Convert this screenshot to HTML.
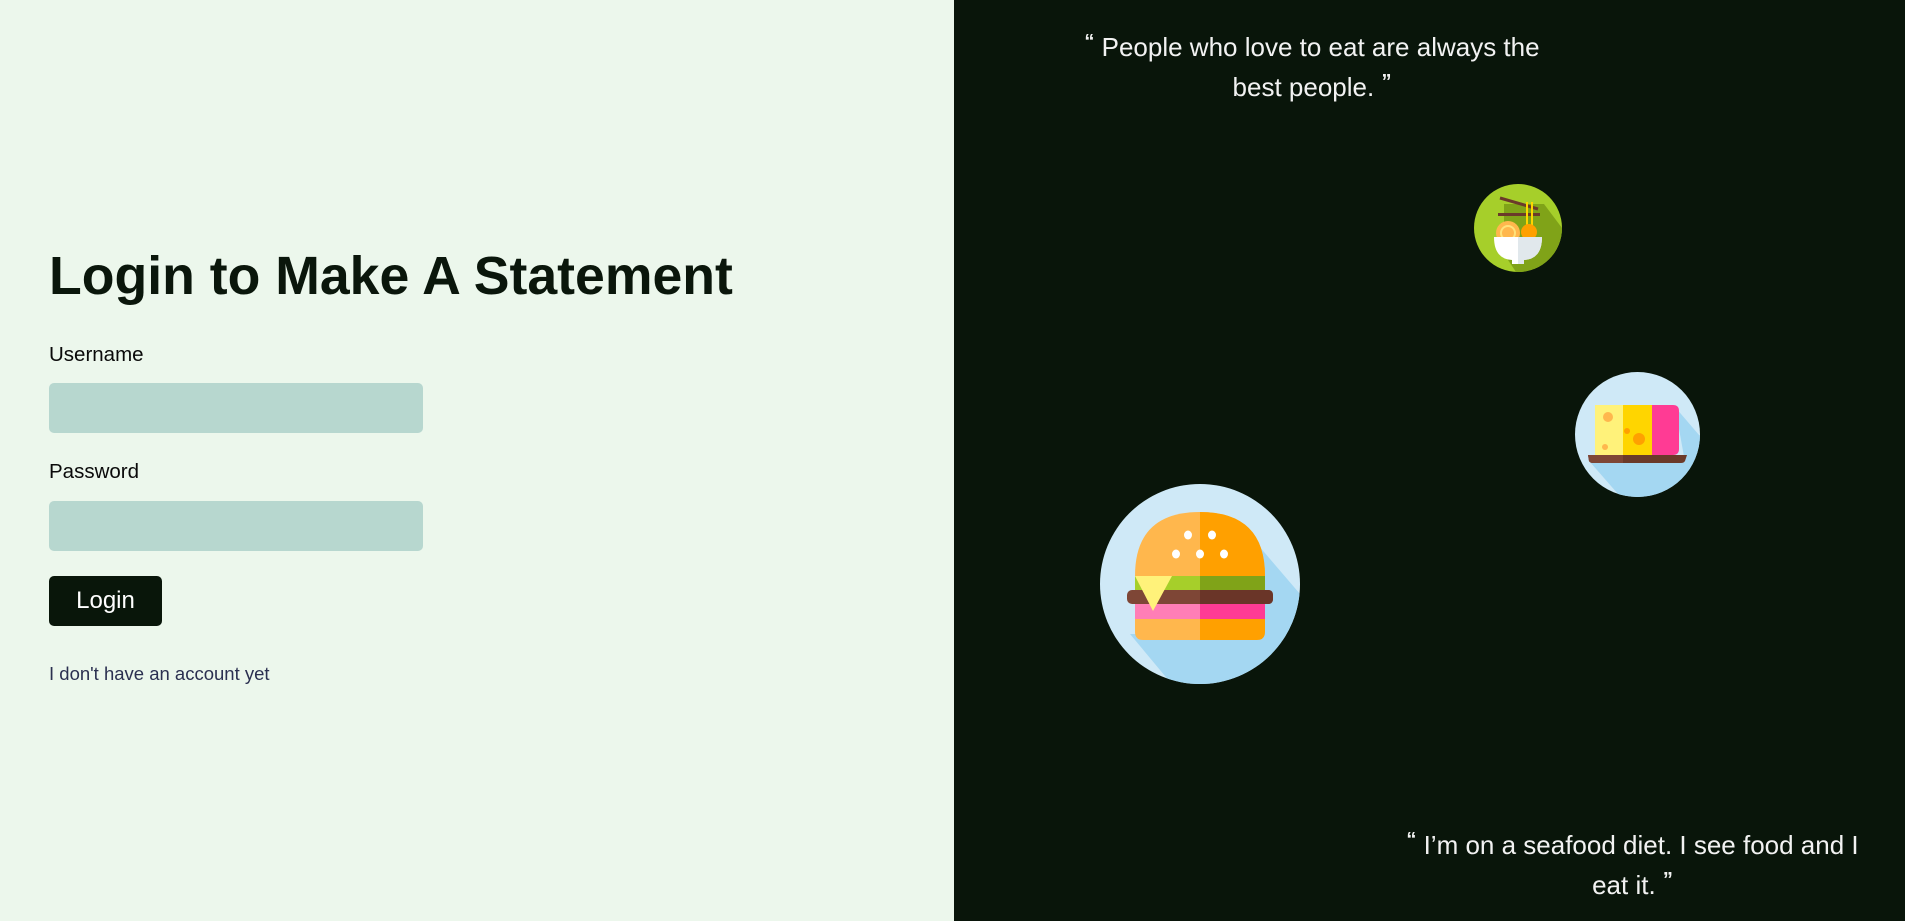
<!DOCTYPE html>
<html><head><meta charset="utf-8"><style>
html,body{margin:0;padding:0}
body{width:1905px;height:921px;position:relative;overflow:hidden;font-family:"Liberation Sans",sans-serif}
.left{position:absolute;left:0;top:0;width:954px;height:921px;background:#ecf7ec}
.right{position:absolute;left:954px;top:0;width:951px;height:921px;background:#09150a}
h1{position:absolute;left:49px;top:245px;margin:0;font-size:53.6px;font-weight:bold;color:#0a160b;letter-spacing:0px;white-space:nowrap}
.lbl{position:absolute;left:49px;font-size:20.5px;color:#0a0a0a}
.inp{position:absolute;left:49px;width:374px;height:50px;border-radius:5px;background:#b7d7cf}
.btn{position:absolute;left:49px;top:576px;width:113px;height:50px;border-radius:5px;background:#09160a;color:#fff;font-size:24px;line-height:50px;text-align:center}
.link{position:absolute;left:49px;top:663px;font-size:18.5px;color:#2b3050}
.q{position:absolute;color:#f2f2f2;font-size:26px;line-height:40px;text-align:center;white-space:nowrap}
.q sup{font-size:20px;vertical-align:8px;line-height:0;font-weight:bold}
svg{position:absolute}
</style></head><body>
<div class="left">
<h1>Login to Make A Statement</h1>
<div class="lbl" style="top:343px">Username</div>
<div class="inp" style="top:383px"></div>
<div class="lbl" style="top:460px">Password</div>
<div class="inp" style="top:501px"></div>
<div class="btn">Login</div>
<div class="link">I don't have an account yet</div>
</div>
<div class="right"></div>
<div class="q" style="left:1052px;width:520px;top:27px"><sup>“</sup> People who love to eat are always the<br>best people. <sup>”</sup></div>
<div class="q" style="left:1375px;width:515px;top:825px"><sup>“</sup> I’m on a seafood diet. I see food and I<br>eat it. <sup>”</sup></div>

<!-- noodles -->
<svg style="left:1474px;top:184px" width="88" height="88" viewBox="0 0 88 88">
<defs><clipPath id="c1"><circle cx="44" cy="44" r="44"/></clipPath></defs>
<circle cx="44" cy="44" r="44" fill="#a6cf2a"/>
<polygon clip-path="url(#c1)" points="30,20 70,20 100,60 100,100 50,100 30,70" fill="#80a318"/>
<line x1="26" y1="14" x2="64" y2="25" stroke="#6b3a2a" stroke-width="3"/>
<rect x="24" y="29" width="42" height="3" fill="#6b3a2a"/>
<rect x="52" y="18" width="2" height="28" fill="#ffd500"/><rect x="57" y="18" width="2" height="28" fill="#ffd500"/>
<circle cx="34" cy="49" r="12" fill="#ffb74d"/><circle cx="34" cy="49" r="7" fill="none" stroke="#ffe27a" stroke-width="2"/>
<circle cx="55" cy="48" r="8" fill="#ffa000"/>
<path d="M20 53 H68 Q68 75 50 76 V80 H38 V76 Q20 75 20 53Z" fill="#fff"/>
<path d="M44 53 H68 Q68 75 50 76 V80 H44Z" fill="#e1e8ec"/>
</svg>

<!-- cheese -->
<svg style="left:1575px;top:372px" width="125" height="125" viewBox="0 0 125 125">
<defs><clipPath id="c2"><circle cx="62.5" cy="62.5" r="62.5"/></clipPath></defs>
<circle cx="62.5" cy="62.5" r="62.5" fill="#cfe9f7"/>
<polygon clip-path="url(#c2)" points="100,35 130,70 130,130 50,130 15,90 110,90" fill="#a4d7f2"/>
<rect x="20" y="33" width="28" height="50" fill="#fff27a"/>
<rect x="48" y="33" width="29" height="50" fill="#ffd500"/>
<path d="M77 33 H98 Q104 33 104 39 V77 Q104 83 98 83 H77Z" fill="#ff3b94"/>
<circle cx="33" cy="45" r="5" fill="#ffb74d"/><circle cx="52" cy="59" r="3" fill="#ffa000"/><circle cx="64" cy="67" r="6" fill="#ffa000"/><circle cx="30" cy="75" r="3" fill="#ffb74d"/>
<path d="M13 83 H112 L110 89 Q109 91 106 91 H18 Q15 91 14 89Z" fill="#6b3a2a"/>
<path d="M13 83 H48 V91 H18 Q15 91 14 89Z" fill="#7e4636"/>
</svg>

<!-- burger -->
<svg style="left:1100px;top:484px" width="200" height="200" viewBox="0 0 200 200">
<defs><clipPath id="c3"><circle cx="100" cy="100" r="100"/></clipPath></defs>
<circle cx="100" cy="100" r="100" fill="#cfe9f7"/>
<polygon clip-path="url(#c3)" points="140,40 200,110 200,210 80,210 30,150 160,150" fill="#a4d7f2"/>
<path d="M35 92 Q35 28 100 28 Q165 28 165 92Z" fill="#ffb74d"/>
<path d="M100 28 Q165 28 165 92 H100Z" fill="#ffa000"/>
<g fill="#fff"><ellipse cx="88" cy="51" rx="4" ry="4.5"/><ellipse cx="112" cy="51" rx="4" ry="4.5"/><ellipse cx="76" cy="70" rx="4" ry="4.5"/><ellipse cx="100" cy="70" rx="4" ry="4.5"/><ellipse cx="124" cy="70" rx="4" ry="4.5"/></g>
<rect x="35" y="92" width="65" height="15" fill="#a6cf2a"/><rect x="100" y="92" width="65" height="15" fill="#80a318"/>
<rect x="27" y="106" width="146" height="14" rx="5" fill="#7e4636"/>
<path d="M100 106 H168 Q173 106 173 111 V115 Q173 120 168 120 H100Z" fill="#6a3528"/>
<rect x="35" y="120" width="65" height="15" fill="#ff7eb6"/><rect x="100" y="120" width="65" height="15" fill="#ff3b94"/>
<path d="M35 135 H100 V156 H43 Q35 156 35 148Z" fill="#ffb74d"/>
<path d="M100 135 H165 V148 Q165 156 157 156 H100Z" fill="#ffa000"/>
<polygon points="35,92 72,92 53,127" fill="#fff27a"/>
</svg>
</body></html>
